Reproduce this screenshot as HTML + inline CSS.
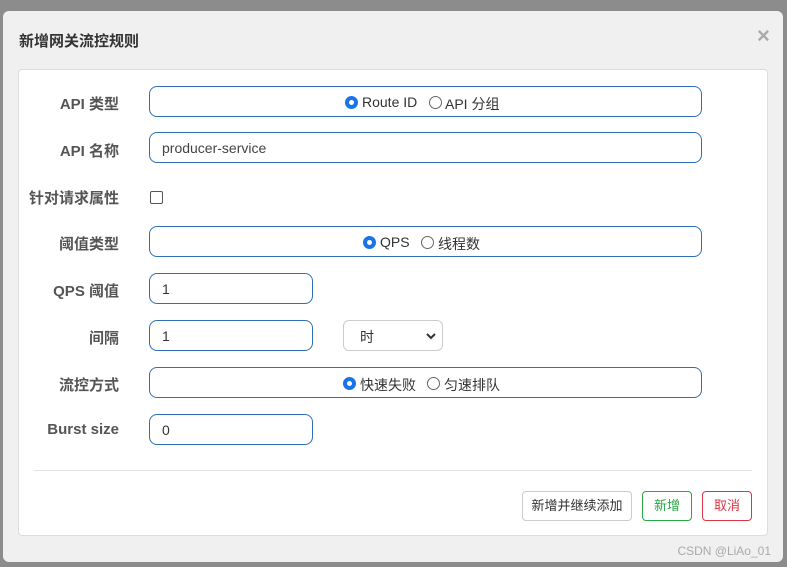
<!DOCTYPE html>
<html><head><meta charset="utf-8"><style>
*{box-sizing:border-box;margin:0;padding:0}
body{width:787px;height:567px;background:#8c8c8c;position:relative;overflow:hidden;font-family:"Liberation Sans","Noto Sans CJK SC",sans-serif;font-size:14px;color:#333}
.modal{position:absolute;left:3px;top:11px;width:780px;height:551px;background:#f0f0f0;border-radius:6px}
.title{position:absolute;left:16px;top:19px;font-size:15px;font-weight:bold;color:#333}
.close{position:absolute;left:754px;top:12px;font-size:22px;color:#aaa;font-weight:bold}
.card{position:absolute;left:15px;top:58px;width:750px;height:467px;background:#fff;border:1px solid #ddd;border-radius:4px}
.lbl{position:absolute;width:100px;text-align:right;font-weight:bold;color:#555;font-size:15px;white-space:nowrap}
.box{position:absolute;border:1px solid #2f6fb5;border-radius:8px;height:31px;background:#fff}
.box span{position:absolute;top:7px}
.rad{position:absolute;top:9px;width:13px;height:13px;border-radius:50%;border:1px solid #666}
.rad.on{border:4px solid #1a73e8}
.sep{position:absolute;left:15px;top:400px;width:718px;border-top:1px solid #e3e3e3}
.btn{position:absolute;top:421px;height:30px;border-radius:4px;border:1px solid #ccc;font-size:13px;text-align:center;line-height:28px}
</style></head><body>
<div class="modal">
<div class="title">新增网关流控规则</div>
<div class="close">×</div>
<div class="card">
<div class="lbl" style="left:0;top:23px">API 类型</div>
<div class="box" style="left:130px;top:16px;width:553px"><div class="rad on" style="left:195px"></div><span style="left:212px">Route ID</span><div class="rad" style="left:279px"></div><span style="left:295px">API 分组</span></div>
<div class="lbl" style="left:0;top:70px">API 名称</div>
<div class="box" style="left:130px;top:62px;width:553px"><span style="left:12px;color:#444">producer-service</span></div>
<div class="lbl" style="left:0;top:117px">针对请求属性</div>
<div style="position:absolute;left:131px;top:121px;width:13px;height:13px;border:1px solid #555;border-radius:2px"></div>
<div class="lbl" style="left:0;top:163px">阈值类型</div>
<div class="box" style="left:130px;top:156px;width:553px"><div class="rad on" style="left:213px"></div><span style="left:230px">QPS</span><div class="rad" style="left:271px"></div><span style="left:288px">线程数</span></div>
<div class="lbl" style="left:0;top:210px">QPS 阈值</div>
<div class="box" style="left:130px;top:203px;width:164px"><span style="left:12px">1</span></div>
<div class="lbl" style="left:0;top:257px">间隔</div>
<div class="box" style="left:130px;top:250px;width:164px"><span style="left:12px">1</span></div>
<div style="position:absolute;left:324px;top:250px;width:100px;height:31px;border:1px solid #ccc;border-radius:6px"><span style="position:absolute;left:16px;top:6px">时</span><svg style="position:absolute;left:82px;top:11px" width="10" height="8" viewBox="0 0 10 8"><path d="M1 2 L5 6 L9 2" fill="none" stroke="#333" stroke-width="2"/></svg></div>
<div class="lbl" style="left:0;top:304px">流控方式</div>
<div class="box" style="left:130px;top:297px;width:553px"><div class="rad on" style="left:193px"></div><span style="left:210px">快速失败</span><div class="rad" style="left:277px"></div><span style="left:294px">匀速排队</span></div>
<div class="lbl" style="left:0;top:351px">Burst size</div>
<div class="box" style="left:130px;top:344px;width:164px"><span style="left:12px">0</span></div>
<div class="sep"></div>
<div class="btn" style="left:503px;width:110px">新增并继续添加</div>
<div class="btn" style="left:623px;width:50px;border-color:#28a745;color:#28a745">新增</div>
<div class="btn" style="left:683px;width:50px;border-color:#dc3545;color:#dc3545">取消</div>
</div>
<div style="position:absolute;right:12px;top:533px;font-size:12px;color:#aaa">CSDN @LiAo_01</div>
</div>
</body></html>
